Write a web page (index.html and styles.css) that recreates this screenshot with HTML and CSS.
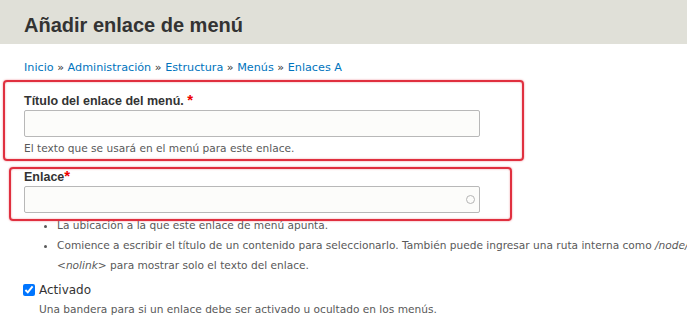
FILE: index.html
```html
<!DOCTYPE html>
<html lang="es">
<head>
  <title>Añadir enlace de menú</title>
  <link rel="stylesheet" href="styles.css">
</head>
<body>
<div class="page-header">
  <h1 class="page-title">Añadir enlace de menú</h1>
</div>

<div class="main-content">
  <nav class="breadcrumb">
    <a href="#">Inicio</a> » <a href="#">Administración</a> » <a href="#">Estructura</a> » <a href="#">Menús</a> » <a href="#">Enlaces A</a>
  </nav>

  <div class="form-item title-item">
    <span class="mark mark-title"></span>
    <label class="form-label" for="link-title">Título del enlace del menú. <span class="required">*</span></label>
    <input type="text" id="link-title" class="form-text">
    <div class="description">El texto que se usará en el menú para este enlace.</div>
  </div>

  <div class="form-item link-item">
    <span class="mark mark-link"></span>
    <label class="form-label" for="link-uri">Enlace<span class="required">*</span></label>
    <div class="autocomplete">
      <input type="text" id="link-uri" class="form-text">
      <span class="throbber"></span>
    </div>
    <ul class="help-list">
      <li>La ubicación a la que este enlace de menú apunta.</li>
      <li>Comience a escribir el título de un contenido para seleccionarlo. También puede ingresar una ruta interna como <em>/node/add</em> o una URL externa como <em>http://example.com</em>. Ingrese<br><em>&lt;nolink&gt;</em> para mostrar solo el texto del enlace.</li>
    </ul>
  </div>

  <div class="form-item check-item">
    <label class="check-label"><input type="checkbox" checked> Activado</label>
    <div class="description check-desc">Una bandera para si un enlace debe ser activado u ocultado en los menús.</div>
  </div>
</div>
</body>
</html>
```

FILE: styles.css
```css
body {
  margin: 0;
  font-family: 'DejaVu Sans', Verdana, sans-serif;
  color: #333;
  background: #fff;
  overflow: hidden;
}

.page-header {
  background-color: #e0e0d8;
  height: 44px;
  padding-left: 24px;
}

.page-title {
  margin: 0;
  font-family: 'Liberation Sans', Arial, sans-serif;
  font-size: 20px;
  line-height: 50px;
  font-weight: bold;
  color: #333;
}

.main-content {
  padding: 0 24px;
}

.breadcrumb {
  font-size: 11.2px;
  margin-top: 16px;
  line-height: 16px;
  color: #333;
}

.breadcrumb a {
  color: #0074bd;
  text-decoration: none;
}

.form-item {
  position: relative;
}

.title-item {
  margin-top: 16px;
}

.form-label {
  display: block;
  font-family: 'Liberation Sans', Arial, sans-serif;
  font-size: 12.5px;
  font-weight: bold;
  line-height: 16px;
}

.required {
  color: #e00;
  font-size: 15px;
}

.form-text {
  display: block;
  box-sizing: border-box;
  width: 456px;
  height: 27px;
  margin-top: 1px;
  border: 1px solid #b8b8b8;
  border-radius: 2px;
  background: #fcfcfa;
  padding: 4px 6px;
}

.description {
  font-size: 10.6px;
  color: #595959;
  line-height: 16px;
  margin-top: 3px;
}

.link-item {
  margin-top: 12px;
}

.autocomplete {
  position: relative;
  width: 456px;
}

.throbber {
  position: absolute;
  right: 5px;
  top: 9px;
  width: 7px;
  height: 7px;
  border: 1.5px solid #b4b4b4;
  border-radius: 50%;
}

.help-list {
  margin: 2px 0 0;
  padding-left: 33px;
  font-size: 10.6px;
  line-height: 20px;
  color: #595959;
  white-space: nowrap;
}

.help-list em {
  font-style: italic;
}

.check-item {
  margin-top: 5px;
}

.check-label {
  display: flex;
  align-items: center;
  gap: 4px;
  font-size: 12px;
  line-height: 20px;
  color: #333;
  margin-left: -1px;
}

.check-label input {
  margin: 0;
  width: 12px;
  height: 12px;
}

.check-desc {
  margin-left: 15px;
  margin-top: 1px;
}

/* red annotation frames drawn over the fields */
.mark {
  position: absolute;
  border: 2px solid #e0303f;
  border-radius: 4px;
  box-shadow: 0 0 2px rgba(224, 48, 63, 0.6), inset 0 0 2px rgba(224, 48, 63, 0.5);
  pointer-events: none;
}

.mark-title {
  left: -21px;
  top: -12px;
  width: 517px;
  height: 77px;
}

.mark-link {
  left: -15px;
  top: -1px;
  width: 499px;
  height: 50px;
}
```
